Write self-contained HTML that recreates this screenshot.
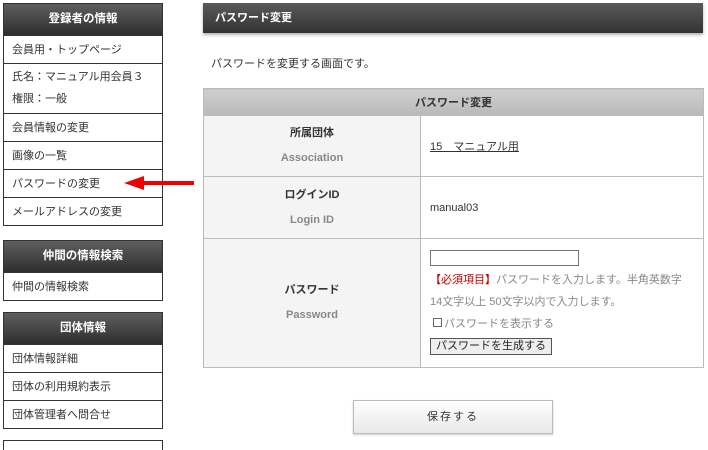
<!DOCTYPE html>
<html><head><meta charset="utf-8"><style>
*{margin:0;padding:0;box-sizing:border-box}
body{width:708px;height:443px;overflow:hidden;background:#fff;font-family:"Liberation Sans","Noto Sans CJK JP",sans-serif;font-size:11px;color:#333;position:relative}
.box{position:absolute;left:3px;width:160px;border:1px solid #333;background:#fff;white-space:nowrap}
.bh{height:31px;background:linear-gradient(#5e5e5e,#2e2e2e);color:#fff;font-weight:bold;text-align:center;line-height:31px;font-size:11.5px}
.it{border-top:1px solid #333;padding-left:8px;height:28px;line-height:28px}
.it2{border-top:1px solid #333;padding:2px 8px;height:50px;line-height:22px}
.mh{position:absolute;left:203px;top:3px;width:500px;height:30px;background:linear-gradient(#5a5a5a,#333);color:#fff;font-weight:bold;line-height:30px;padding-left:12px;box-shadow:0 2px 3px rgba(0,0,0,.3)}
table{position:absolute;left:203px;top:88px;width:501px;border-collapse:collapse}
td,th{border:1px solid #bbb}
th.top{height:27px;background:linear-gradient(#cfcfcf,#b9b9b9);font-weight:bold}
td.l{width:217px;background:#f4f4f4;text-align:center;font-weight:bold;line-height:25px}
td.l span{color:#888;font-size:11px;display:block}
td.r{padding-left:9px;white-space:nowrap}
</style></head><body>
<div class="box" style="top:3px"><div class="bh">登録者の情報</div>
<div class="it">会員用・トップページ</div>
<div class="it2">氏名：マニュアル用会員３<br>権限：一般</div>
<div class="it">会員情報の変更</div>
<div class="it">画像の一覧</div>
<div class="it">パスワードの変更</div>
<div class="it">メールアドレスの変更</div></div>
<div class="box" style="top:240px"><div class="bh">仲間の情報検索</div><div class="it">仲間の情報検索</div></div>
<div class="box" style="top:312px"><div class="bh">団体情報</div><div class="it">団体情報詳細</div><div class="it">団体の利用規約表示</div><div class="it">団体管理者へ問合せ</div></div>
<div class="box" style="top:440px;height:10px;border-bottom:none"></div>
<svg style="position:absolute;left:122px;top:173px" width="74" height="20"><path d="M72 8H22V3L2 10L22 17V12H72Z" fill="#e00"/></svg>
<div class="mh">パスワード変更</div>
<div style="position:absolute;left:211px;top:55px">パスワードを変更する画面です。</div>
<table>
<tr><th class="top" colspan="2">パスワード変更</th></tr>
<tr style="height:61px"><td class="l">所属団体<span>Association</span></td><td class="r"><u>15　マニュアル用</u></td></tr>
<tr style="height:62px"><td class="l">ログインID<span>Login ID</span></td><td class="r">manual03</td></tr>
<tr style="height:129px"><td class="l">パスワード<span>Password</span></td><td class="r" style="line-height:22px;color:#888">
<div style="width:149px;height:16px;border:1px solid #777;margin:1px 0 3px"></div>
<span style="color:#b00">【必須項目】</span>パスワードを入力します。半角英数字<br>14文字以上 50文字以内で入力します。<br>
<span style="display:inline-block;width:9px;height:9px;border:1px solid #666;margin:0 2px 0 3px"></span>パスワードを表示する<br>
<span style="display:inline-block;border:1px solid #555;background:#eee;color:#222;padding:0 5px;line-height:15px">パスワードを生成する</span></td></tr>
</table>
<div style="position:absolute;left:353px;top:400px;width:200px;height:34px;border:1px solid #bbb;background:linear-gradient(#fff,#e8e8e8);text-align:center;line-height:32px;letter-spacing:2px;box-shadow:0 1px 2px rgba(0,0,0,.2)">保存する</div>
</body></html>
